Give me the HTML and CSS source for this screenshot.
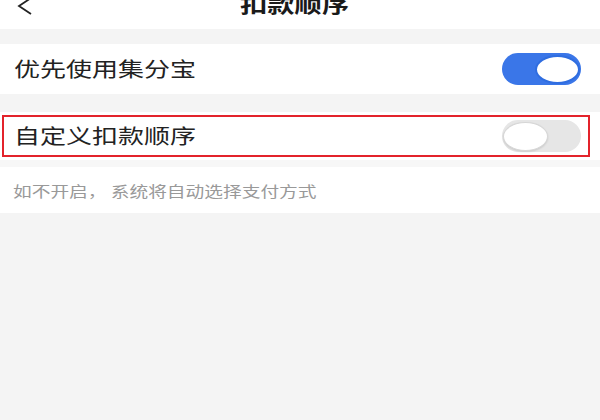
FILE: index.html
```html
<!DOCTYPE html>
<html lang="zh">
<head>
<meta charset="utf-8">
<link rel="stylesheet" href="styles.css">
</head>
<body>
<div class="page">
  <header class="topbar">
    <svg class="back" width="18" height="16" viewBox="0 0 18 16"><polyline points="15,-1 3,7 15,15" fill="none" stroke="#222" stroke-width="1.8" stroke-linejoin="miter"/></svg>
    <h1 class="title"><span class="wide">扣款顺序</span></h1>
  </header>
  <div class="gap gap-top"></div>
  <div class="row row-1">
    <span class="label wide">优先使用集分宝</span>
    <span class="switch on"><span class="knob"></span></span>
  </div>
  <div class="gap gap-mid"></div>
  <div class="row row-2">
    <span class="label wide">自定义扣款顺序</span>
    <span class="switch off"><span class="knob"></span></span>
    <span class="highlight"></span>
  </div>
  <div class="gap gap-small"></div>
  <div class="note"><span class="note-text wide">如不开启， 系统将自动选择支付方式</span></div>
</div>
</body>
</html>
```
FILE: styles.css
```css
html, body {
  margin: 0;
  padding: 0;
  background: #f4f4f4;
}
body {
  width: 600px;
  height: 420px;
  overflow: hidden;
  font-family: "Noto Sans CJK SC", "Noto Sans", sans-serif;
  color: #222;
}
.page {
  display: flex;
  flex-direction: column;
}
.wide {
  display: inline-block;
  transform: scaleX(1.3);
  transform-origin: left center;
  white-space: nowrap;
}
.topbar {
  height: 29px;
  background: #fff;
  display: flex;
  align-items: flex-start;
  overflow: hidden;
}
.back {
  margin-left: 16px;
  margin-top: -1px;
  flex: none;
}
.title {
  margin: -12px 0 0 206px;
  font-size: 21px;
  font-weight: 700;
  line-height: 30px;
  color: #1a1a1a;
}
.gap-top { height: 15px; }
.gap-mid { height: 18px; }
.gap-small { height: 7px; background: #f7f7f7; }
.row {
  background: #fff;
  display: flex;
  align-items: center;
  justify-content: space-between;
  padding: 0 19px 0 14px;
}
.row-1 { height: 50px; }
.row-2 { height: 48px; position: relative; }
.label {
  font-size: 20px;
  line-height: 24px;
  color: #222;
}
.switch {
  width: 79px;
  height: 32px;
  border-radius: 16px;
  display: flex;
  align-items: center;
  box-sizing: border-box;
  padding: 0 1px;
}
.switch.on {
  background: #3a76e8;
  justify-content: flex-end;
}
.switch.off {
  background: #e6e6e6;
  justify-content: flex-start;
}
.knob {
  width: 45px;
  height: 29px;
  border-radius: 50%;
  background: #fff;
  box-sizing: border-box;
}
.switch.on .knob { border: 2px solid #2f6de0; }
.switch.off .knob { border: 1px solid #d6d6d6; box-shadow: 0 1px 2px rgba(0,0,0,0.12); }
.highlight {
  position: absolute;
  left: 2px;
  top: 3px;
  width: 588px;
  height: 42px;
  border: 2px solid #e3232b;
  box-sizing: border-box;
  pointer-events: none;
}
.note {
  background: #fff;
  height: 46px;
  display: flex;
  align-items: center;
  padding-left: 13px;
}
.note-text {
  font-size: 14.4px;
  color: #999;
}
```
